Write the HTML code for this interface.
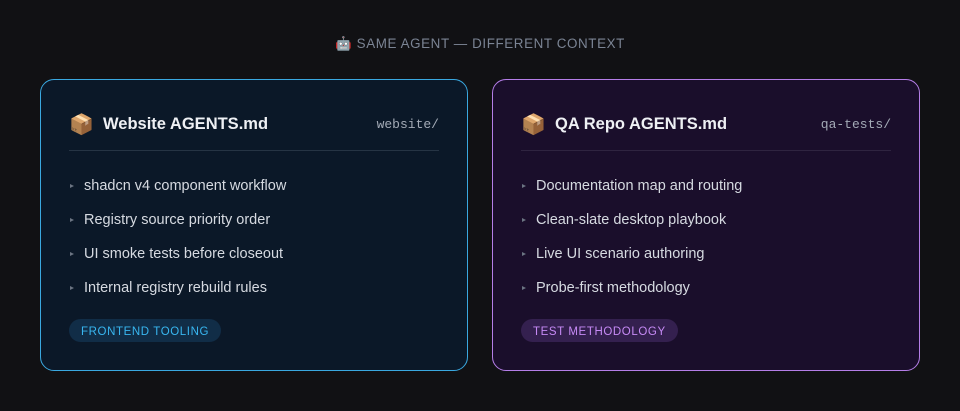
<!DOCTYPE html>
<html><head><meta charset="utf-8"><style>
*{margin:0;padding:0;box-sizing:border-box}
body{width:960px;height:411px;background:#111114;font-family:"Liberation Sans","DejaVu Sans",sans-serif;position:relative;overflow:hidden}
.top{position:absolute;top:36px;left:0;width:960px;text-align:center;color:#7b8494;font-size:13.4px;letter-spacing:.6px}
.card{position:absolute;top:79px;width:428px;height:292px;border-radius:14px;border:1px solid}
.c1{left:40px;background:#0b1828;border-color:#3aa8e0}
.c2{left:492px;background:#1a0e2b;border-color:#b57ee8}
.hd{position:absolute;left:28px;right:28px;top:31px;height:26px;display:flex;align-items:center}
.hd .e{font-size:20px;width:34px}
.hd .t{color:#eef0f4;font-weight:bold;font-size:16.5px;flex:1}
.hd .p{font-family:"Liberation Mono",monospace;font-size:13px;color:#a3aab6}
.dv{position:absolute;left:28px;right:28px;top:70px;height:1px;background:#263444}
.c2 .dv{background:#2f2440}
ul{position:absolute;left:28px;top:98px;list-style:none}
li{height:34px;color:#d6dae1;font-size:14.5px;display:flex;align-items:flex-start}
li:before{content:"";display:inline-block;width:0;height:0;border-left:4px solid #6b7482;border-top:2.5px solid transparent;border-bottom:2.5px solid transparent;margin:6px 10px 0 1px}
.tag{position:absolute;left:28px;top:239px;height:23px;padding:0 12px;border-radius:12px;font-size:11.5px;letter-spacing:.6px;line-height:24px;padding-top:1px}
.c1 .tag{background:#112d47;color:#38b6f0}
.c2 .tag{background:#34204f;color:#c68af5}
</style></head><body>
<div class="top">🤖 SAME AGENT — DIFFERENT CONTEXT</div>
<div class="card c1">
<div class="hd"><span class="e">📦</span><span class="t">Website AGENTS.md</span><span class="p">website/</span></div>
<div class="dv"></div>
<ul><li>shadcn v4 component workflow</li><li>Registry source priority order</li><li>UI smoke tests before closeout</li><li>Internal registry rebuild rules</li></ul>
<div class="tag">FRONTEND TOOLING</div>
</div>
<div class="card c2">
<div class="hd"><span class="e">📦</span><span class="t">QA Repo AGENTS.md</span><span class="p">qa-tests/</span></div>
<div class="dv"></div>
<ul><li>Documentation map and routing</li><li>Clean-slate desktop playbook</li><li>Live UI scenario authoring</li><li>Probe-first methodology</li></ul>
<div class="tag">TEST METHODOLOGY</div>
</div>
</body></html>
